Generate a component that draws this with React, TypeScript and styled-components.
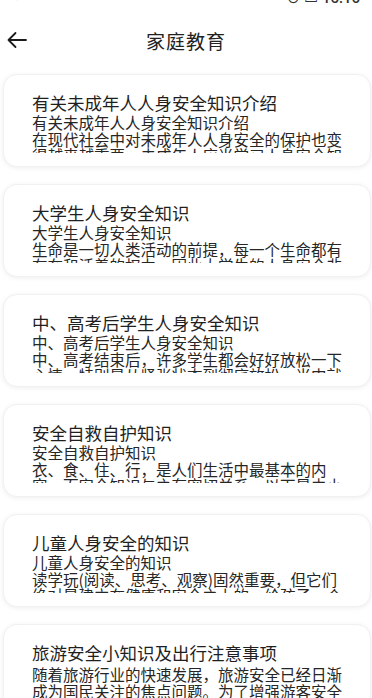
import React from "react";
import styled, { createGlobalStyle } from "styled-components";

const GlobalStyle = createGlobalStyle`
  html, body { margin: 0; padding: 0; background: #ffffff; }
  body { font-family: "Noto Sans CJK SC", "Noto Sans", sans-serif; color: #222; }
  * { box-sizing: border-box; }
`;

const Page = styled.div`
  width: 372px;
  height: 698px;
  overflow: hidden;
  display: flex;
  flex-direction: column;
  background: #fff;
`;

const StatusBar = styled.div`
  height: 6px;
  overflow: hidden;
  display: flex;
  align-items: flex-end;
  justify-content: space-between;
  padding: 0 12px 0 14px;
  flex-shrink: 0;
`;

const StatusGroup = styled.div`
  display: flex;
  align-items: flex-end;
  gap: 6px;
  height: 20px;
  padding-bottom: 1px;
`;

const StatusText = styled.span`
  font-family: "Roboto", "Liberation Sans", sans-serif;
  font-size: 15px;
  line-height: 14px;
  color: #333;
  font-weight: 500;
`;

const Header = styled.header`
  height: 68px;
  flex-shrink: 0;
  display: grid;
  grid-template-columns: 48px 1fr 48px;
  align-items: center;
`;

const BackButton = styled.button`
  border: none;
  background: none;
  padding: 0 0 0 6px;
  margin: 0;
  display: flex;
  align-items: center;
  height: 30px;
  cursor: pointer;
`;

const Title = styled.h1`
  margin: 0;
  text-align: center;
  font-size: 19px;
  font-weight: 400;
  color: #222;
  letter-spacing: 1px;
`;

const List = styled.div`
  display: flex;
  flex-direction: column;
  gap: 17px;
  padding: 0 1px 0 3px;
`;

const Card = styled.div`
  background: #fff;
  border-radius: 14px;
  border: 1px solid #f1f1f1;
  box-shadow: 0 1px 5px rgba(0, 0, 0, 0.07);
  padding: 17px 26px 13px 28px;
  flex-shrink: 0;
`;

const CardTitle = styled.div`
  font-size: 17.5px;
  line-height: 22px;
  color: #1f1f1f;
  white-space: nowrap;
`;

const CardBody = styled.div<{ $clip: boolean }>`
  font-size: 15.5px;
  line-height: 16.5px;
  color: #262626;
  height: ${(p) => (p.$clip ? "39px" : "auto")};
  overflow: hidden;
  margin-top: ${(p) => (p.$clip ? "0" : "2px")};
`;

const Line = styled.div``;

type Item = { title: string; sub?: string; text: string };

const items: Item[] = [
  {
    title: "有关未成年人人身安全知识介绍",
    sub: "有关未成年人人身安全知识介绍",
    text: "在现代社会中对未成年人人身安全的保护也变得越来越重要，未成年人应当学习人身安全知识，提高自我保护意识。",
  },
  {
    title: "大学生人身安全知识",
    sub: "大学生人身安全知识",
    text: "生命是一切人类活动的前提，每一个生命都有存在和活着的权力，因此大学生的人身安全非常重要。",
  },
  {
    title: "中、高考后学生人身安全知识",
    sub: "中、高考后学生人身安全知识",
    text: "中、高考结束后，许多学生都会好好放松一下心情，特别是从紧张状态到彻底放松，当中就容易出现安全问题。",
  },
  {
    title: "安全自救自护知识",
    sub: "安全自救自护知识",
    text: "衣、食、住、行，是人们生活中最基本的内容，而安全知识与之有密切关系，以下是由小编整理的安全知识。",
  },
  {
    title: "儿童人身安全的知识",
    sub: "儿童人身安全的知识",
    text: "读学玩(阅读、思考、观察)固然重要，但它们绝对是建立在健康和安全之上的，给孩子一个安全的成长环境。",
  },
  {
    title: "旅游安全小知识及出行注意事项",
    text: "随着旅游行业的快速发展，旅游安全已经日渐成为国民关注的焦点问题。为了增强游客安全意识，提高自我保护能力。",
  },
];

const BackIcon = () => (
  <svg width="22" height="22" viewBox="0 0 22 22" fill="none">
    <path d="M20 11H2.5M9.5 4L2.5 11L9.5 18" stroke="#1a1a1a" strokeWidth="1.8" strokeLinecap="round" strokeLinejoin="round" />
  </svg>
);

export default function App() {
  return (
    <>
      <GlobalStyle />
      <Page>
        <StatusBar>
          <StatusGroup>
            <StatusText>▪ ·</StatusText>
          </StatusGroup>
          <StatusGroup>
            <StatusText>⊙ ▭ 15:16</StatusText>
          </StatusGroup>
        </StatusBar>
        <Header>
          <BackButton aria-label="返回">
            <BackIcon />
          </BackButton>
          <Title>家庭教育</Title>
          <span />
        </Header>
        <List>
          {items.map((it) => (
            <Card key={it.title}>
              <CardTitle>{it.title}</CardTitle>
              <CardBody $clip={!!it.sub}>
                {it.sub && <Line>{it.sub}</Line>}
                <Line>{it.text}</Line>
              </CardBody>
            </Card>
          ))}
        </List>
      </Page>
    </>
  );
}
